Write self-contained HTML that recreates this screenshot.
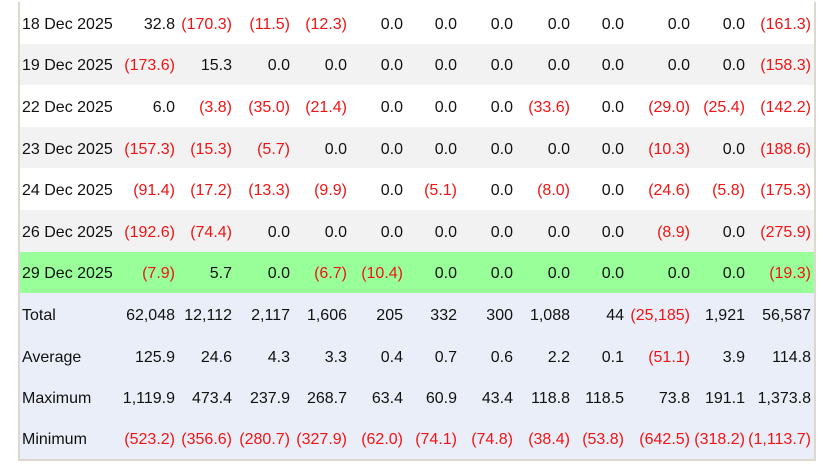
<!DOCTYPE html>
<html><head><style>
html,body{margin:0;padding:0;background:#fff;width:838px;height:464px;overflow:hidden}
table{position:absolute;left:18px;top:2px;border-collapse:collapse;table-layout:fixed;width:798px;font-family:"Liberation Sans",Arial,sans-serif;font-size:16px;color:#111;border-left:2px solid #dcd8d0;border-right:2px solid #dcd8d0;border-bottom:2px solid #dcd8d0}
td{height:41.6px;padding:4px 3px 0 0;box-sizing:border-box;text-align:right;white-space:nowrap;overflow:visible}
td:first-child{text-align:left;padding-left:2px}
tr:nth-child(even){background:#f2f2f2}
tr.g{background:#99ff99}
tr.s{background:#eaeef8}
.r{color:#f01414}
</style></head><body>
<table>
<colgroup><col style="width:101px"><col style="width:58px"><col style="width:57px"><col style="width:58px"><col style="width:57px"><col style="width:56px"><col style="width:54px"><col style="width:56px"><col style="width:57px"><col style="width:54px"><col style="width:66px"><col style="width:55px"><col style="width:67px"></colgroup>
<tr><td>18 Dec 2025</td><td>32.8</td><td class="r">(170.3)</td><td class="r">(11.5)</td><td class="r">(12.3)</td><td>0.0</td><td>0.0</td><td>0.0</td><td>0.0</td><td>0.0</td><td>0.0</td><td>0.0</td><td class="r">(161.3)</td></tr>
<tr><td>19 Dec 2025</td><td class="r">(173.6)</td><td>15.3</td><td>0.0</td><td>0.0</td><td>0.0</td><td>0.0</td><td>0.0</td><td>0.0</td><td>0.0</td><td>0.0</td><td>0.0</td><td class="r">(158.3)</td></tr>
<tr><td>22 Dec 2025</td><td>6.0</td><td class="r">(3.8)</td><td class="r">(35.0)</td><td class="r">(21.4)</td><td>0.0</td><td>0.0</td><td>0.0</td><td class="r">(33.6)</td><td>0.0</td><td class="r">(29.0)</td><td class="r">(25.4)</td><td class="r">(142.2)</td></tr>
<tr><td>23 Dec 2025</td><td class="r">(157.3)</td><td class="r">(15.3)</td><td class="r">(5.7)</td><td>0.0</td><td>0.0</td><td>0.0</td><td>0.0</td><td>0.0</td><td>0.0</td><td class="r">(10.3)</td><td>0.0</td><td class="r">(188.6)</td></tr>
<tr><td>24 Dec 2025</td><td class="r">(91.4)</td><td class="r">(17.2)</td><td class="r">(13.3)</td><td class="r">(9.9)</td><td>0.0</td><td class="r">(5.1)</td><td>0.0</td><td class="r">(8.0)</td><td>0.0</td><td class="r">(24.6)</td><td class="r">(5.8)</td><td class="r">(175.3)</td></tr>
<tr><td>26 Dec 2025</td><td class="r">(192.6)</td><td class="r">(74.4)</td><td>0.0</td><td>0.0</td><td>0.0</td><td>0.0</td><td>0.0</td><td>0.0</td><td>0.0</td><td class="r">(8.9)</td><td>0.0</td><td class="r">(275.9)</td></tr>
<tr class="g"><td>29 Dec 2025</td><td class="r">(7.9)</td><td>5.7</td><td>0.0</td><td class="r">(6.7)</td><td class="r">(10.4)</td><td>0.0</td><td>0.0</td><td>0.0</td><td>0.0</td><td>0.0</td><td>0.0</td><td class="r">(19.3)</td></tr>
<tr class="s"><td>Total</td><td>62,048</td><td>12,112</td><td>2,117</td><td>1,606</td><td>205</td><td>332</td><td>300</td><td>1,088</td><td>44</td><td class="r">(25,185)</td><td>1,921</td><td>56,587</td></tr>
<tr class="s"><td>Average</td><td>125.9</td><td>24.6</td><td>4.3</td><td>3.3</td><td>0.4</td><td>0.7</td><td>0.6</td><td>2.2</td><td>0.1</td><td class="r">(51.1)</td><td>3.9</td><td>114.8</td></tr>
<tr class="s"><td>Maximum</td><td>1,119.9</td><td>473.4</td><td>237.9</td><td>268.7</td><td>63.4</td><td>60.9</td><td>43.4</td><td>118.8</td><td>118.5</td><td>73.8</td><td>191.1</td><td>1,373.8</td></tr>
<tr class="s"><td>Minimum</td><td class="r">(523.2)</td><td class="r">(356.6)</td><td class="r">(280.7)</td><td class="r">(327.9)</td><td class="r">(62.0)</td><td class="r">(74.1)</td><td class="r">(74.8)</td><td class="r">(38.4)</td><td class="r">(53.8)</td><td class="r">(642.5)</td><td class="r">(318.2)</td><td class="r">(1,113.7)</td></tr>
</table>
</body></html>
